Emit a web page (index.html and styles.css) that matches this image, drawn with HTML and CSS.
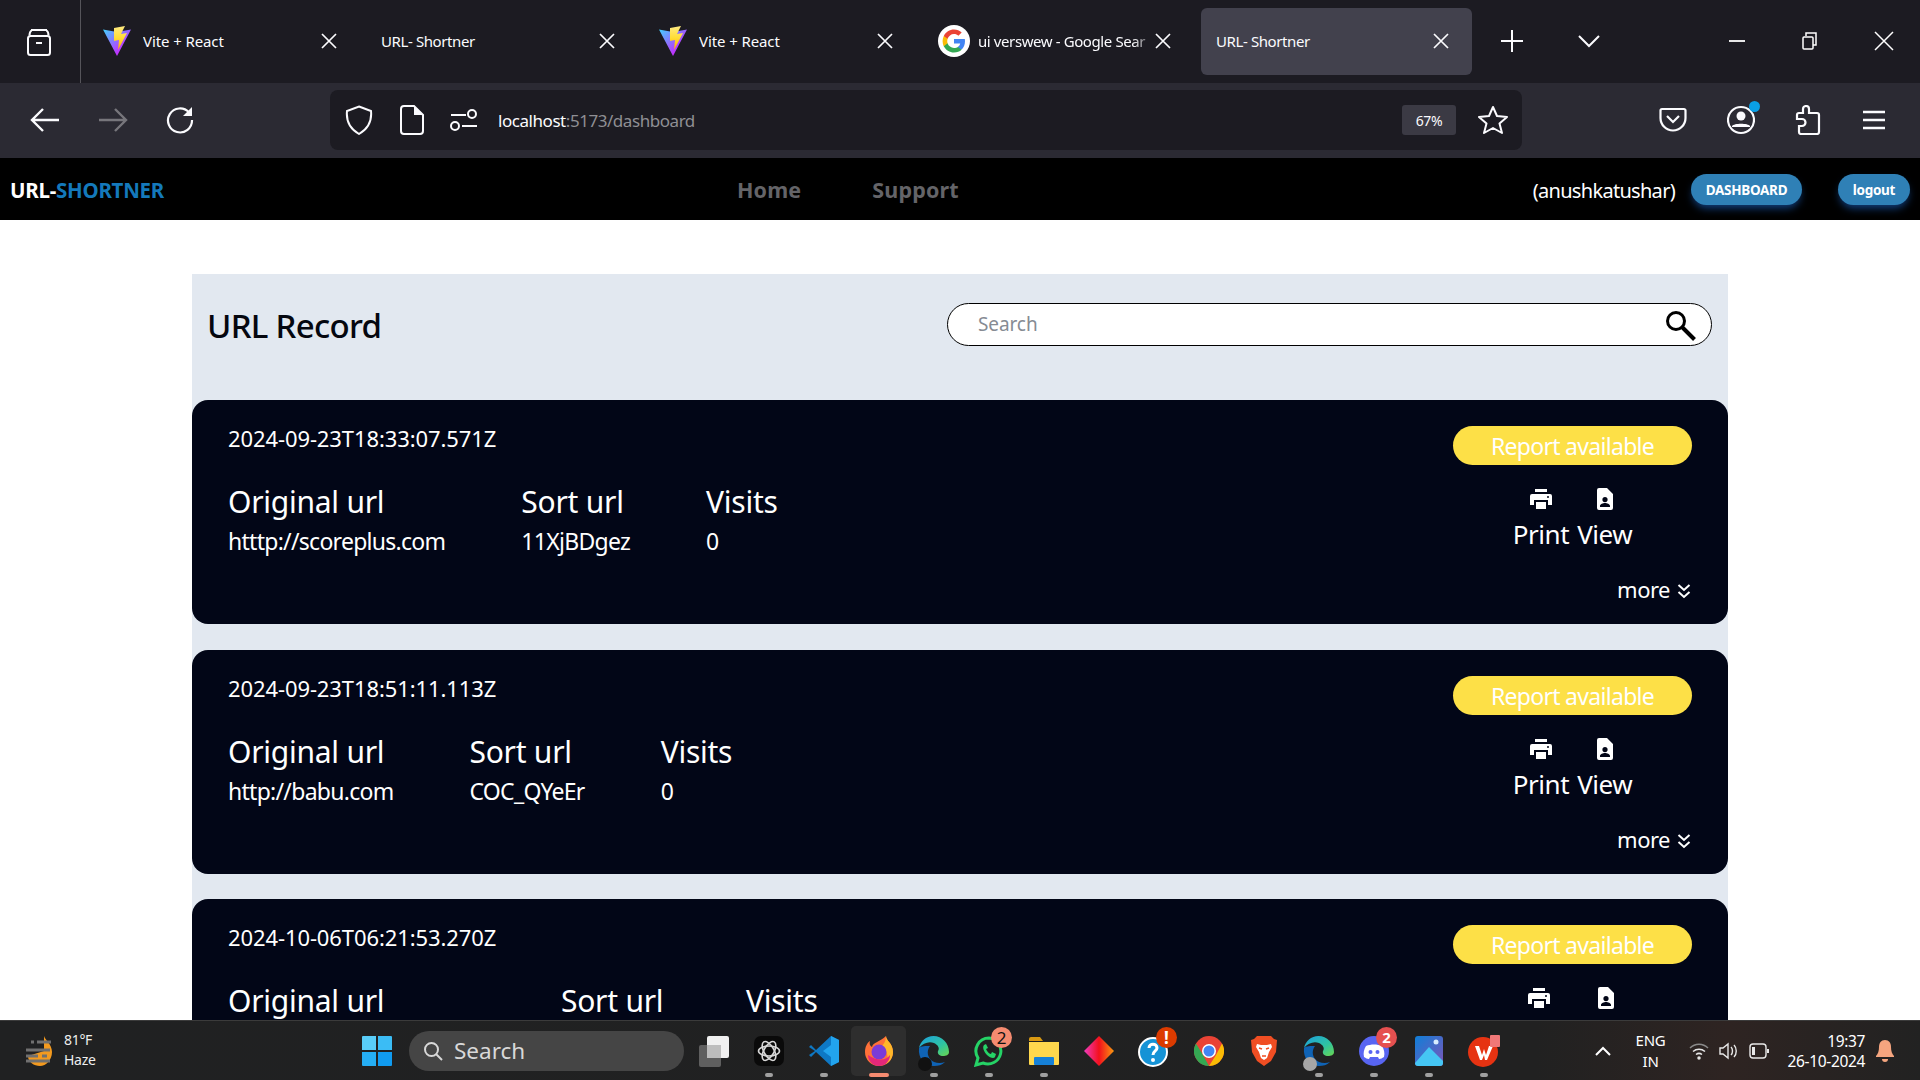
FILE: index.html
```html
<!DOCTYPE html>
<html lang="en">
<head>
<meta charset="utf-8">
<title>URL- Shortner</title>
<link rel="stylesheet" href="styles.css">
</head>
<body>
<svg class="defs" width="0" height="0" aria-hidden="true">
  <defs>
    <linearGradient id="vb" x1="0" y1="0" x2="1" y2="1"><stop offset="0" stop-color="#41d1ff"/><stop offset=".7" stop-color="#bd34fe"/></linearGradient>
    <linearGradient id="vy" x1="0" y1="0" x2="0" y2="1"><stop offset="0" stop-color="#ffea83"/><stop offset=".5" stop-color="#ffdd35"/><stop offset="1" stop-color="#ffa800"/></linearGradient>
    <linearGradient id="eg" x1="0" y1="0" x2="1" y2="1"><stop offset="0" stop-color="#1c9fe0"/><stop offset=".6" stop-color="#2fc4a0"/><stop offset="1" stop-color="#6ad64f"/></linearGradient>
    <symbol id="vite" viewBox="0 0 32 32"><path d="M2 4.500L16 7l14-2.500L16 31z" fill="url(#vb)"/><path d="M13 3l11-2-4 8 6-1-9 17 1-10-5 1z" fill="url(#vy)"/></symbol>
    <symbol id="x" viewBox="0 0 18 18"><path d="M2 2l14 14M16 2L2 16" stroke="#fbfbfe" stroke-width="1.700" fill="none"/></symbol>
    <symbol id="printer" viewBox="0 0 24 24"><path d="M6 2h12v3H6zM3 7h18a2 2 0 0 1 2 2v9h-4v-5H5v5H1V9a2 2 0 0 1 2-2zm16 2a1 1 0 1 0 0 2 1 1 0 0 0 0-2zM7 15h10v7H7z" fill="#fff"/></symbol>
    <symbol id="doc" viewBox="0 0 24 24"><path fill-rule="evenodd" d="M6 1h8l6 6v14a2 2 0 0 1-2 2H6a2 2 0 0 1-2-2V3a2 2 0 0 1 2-2zm6 9a2.600 2.600 0 1 0 0 5.200 2.600 2.600 0 0 0 0-5.200zm-5 10h10v-1c0-2-3-3-5-3s-5 1-5 3z" fill="#fff"/></symbol>
    <symbol id="chev2" viewBox="0 0 14 16"><path d="M1.500 2l5.500 5 5.500-5M1.500 9l5.500 5 5.500-5" stroke="#fff" stroke-width="2" fill="none"/></symbol>
    <symbol id="edge" viewBox="0 0 32 32"><path d="M31 17C31 8 24 1 15.500 1 8 1 2.500 6 1 13c4-5 10-7 15-5 4 2 6 5 4 8-1 3 2 5 5 5 3 0 6-1 6-4z" fill="url(#eg)"/><path d="M1 13C0 23 6 31 16 31c4 0 8-1 11-4-5 2-12 1-15-3-3-4-3-9 0-13-4 0-9 0-11 2z" fill="#0f63b5"/></symbol>
  </defs>
</svg>

<header class="tabstrip">
  <div class="tab-side">
    <svg width="30" height="30" viewBox="0 0 30 30" fill="none" stroke="#fbfbfe" stroke-width="2"><rect x="4" y="9" width="22" height="19" rx="2.500"/><path d="M7 3h16M5.500 8.500c0-3 .5-4 2-5M24.500 8.500c0-3-.5-4-2-5M12 16h6"/></svg>
  </div>
  <div class="tabs">
    <div class="tab icon-tab"><svg class="fav" width="32" height="32"><use href="#vite"/></svg><span class="tab-title">Vite + React</span><svg class="tab-x" width="18" height="18"><use href="#x"/></svg></div>
    <div class="tab plain-tab"><span class="tab-title">URL- Shortner</span><svg class="tab-x" width="18" height="18"><use href="#x"/></svg></div>
    <div class="tab icon-tab"><svg class="fav" width="32" height="32"><use href="#vite"/></svg><span class="tab-title">Vite + React</span><svg class="tab-x" width="18" height="18"><use href="#x"/></svg></div>
    <div class="tab icon-tab g-tab">
      <span class="g-bg"><svg width="24" height="24" viewBox="0 0 24 24"><path d="M23 12.300c0-.8-.1-1.600-.2-2.300H12v4.400h6.200c-.3 1.400-1.100 2.600-2.300 3.400v2.800h3.700c2.100-2 3.400-4.900 3.400-8.300z" fill="#4285f4"/><path d="M12 23.500c3.100 0 5.700-1 7.600-2.800l-3.700-2.800c-1 .7-2.400 1.100-3.900 1.100-3 0-5.500-2-6.400-4.700H1.800v2.900c1.900 3.800 5.800 6.300 10.200 6.300z" fill="#34a853"/><path d="M5.600 14.300c-.5-1.400-.5-3 0-4.500V6.900H1.800c-1.600 3.200-1.600 7 0 10.300z" fill="#fbbc05"/><path d="M12 5c1.700 0 3.200.6 4.400 1.700l3.300-3.300C17.700 1.500 15 .5 12 .5 7.600.5 3.700 3 1.800 6.900l3.800 2.900C6.500 7.100 9 5 12 5z" fill="#ea4335"/></svg></span>
      <span class="tab-title clip">ui verswew - Google Sear</span><svg class="tab-x" width="18" height="18"><use href="#x"/></svg>
    </div>
    <div class="tab active"><span class="tab-title">URL- Shortner</span><svg class="tab-x" width="18" height="18"><use href="#x"/></svg></div>
  </div>
  <svg class="t-plus" width="24" height="24" viewBox="0 0 24 24"><path d="M12 1v22M1 12h22" stroke="#fbfbfe" stroke-width="2"/></svg>
  <svg class="t-down" width="24" height="14" viewBox="0 0 24 14"><path d="M2 2l10 10L22 2" stroke="#fbfbfe" stroke-width="2" fill="none"/></svg>
  <div class="win-ctrls">
    <svg width="18" height="18" viewBox="0 0 18 18"><path d="M1 9h16" stroke="#fff" stroke-width="1.800"/></svg>
    <svg width="18" height="18" viewBox="0 0 18 18" fill="none" stroke="#fff" stroke-width="1.500"><rect x="2" y="5" width="10" height="12" rx="1"/><path d="M5 4V1h10v12h-3"/></svg>
    <svg width="20" height="20" viewBox="0 0 20 20"><path d="M1 1l18 18M19 1L1 19" stroke="#fff" stroke-width="1.500"/></svg>
  </div>
</header>

<div class="toolbar">
  <div class="nav-btns">
    <svg width="30" height="26" viewBox="0 0 30 26" fill="none" stroke="#fbfbfe" stroke-width="2.400"><path d="M29 13H3M13 2L2 13l11 11"/></svg>
    <svg width="30" height="26" viewBox="0 0 30 26" fill="none" stroke="#77767c" stroke-width="2.400"><path d="M1 13h26M17 2l11 11-11 11"/></svg>
    <svg width="28" height="28" viewBox="0 0 28 28" fill="none" stroke="#fbfbfe" stroke-width="2.200"><path d="M23 6.500A12 12 0 1 0 26 14"/><path d="M26 1v9h-9z" fill="#fbfbfe" stroke="none"/></svg>
  </div>
  <div class="urlbar">
    <svg width="28" height="30" viewBox="0 0 28 30" fill="none" stroke="#fbfbfe" stroke-width="2"><path d="M14 1.500L26 6c1 10-3 18-12 23C5 24 1 16 2 6z"/></svg>
    <svg width="24" height="30" viewBox="0 0 24 30" fill="none" stroke="#fbfbfe" stroke-width="2"><path d="M4 1h10l9 9v16a3 3 0 0 1-3 3H4a3 3 0 0 1-3-3V4a3 3 0 0 1 3-3z"/><path d="M14 1v9h9z" fill="#fbfbfe" stroke="none"/></svg>
    <svg class="perm" width="28" height="22" viewBox="0 0 28 22" fill="none" stroke="#fbfbfe" stroke-width="2"><path d="M1 6h15M12 17h15"/><circle cx="22" cy="5" r="4"/><circle cx="5" cy="17" r="4"/></svg>
    <span class="address"><span class="host">localhost</span>:5173/dashboard</span>
    <span class="zoom-badge">67%</span>
    <svg width="30" height="30" viewBox="0 0 30 30" fill="none" stroke="#fbfbfe" stroke-width="2" stroke-linejoin="round"><path d="M15 2l4 9 10 1-7.500 6.500L24 28l-9-5-9 5 2.500-9.500L1 12l10-1z"/></svg>
  </div>
  <div class="tool-right">
    <svg width="28" height="26" viewBox="0 0 28 26" fill="none" stroke="#fbfbfe" stroke-width="2.200"><path d="M3 2h22a1.500 1.500 0 0 1 1.500 1.500V11A12.500 12.500 0 0 1 1.500 11V3.500A1.500 1.500 0 0 1 3 2z"/><path d="M8 9l6 6 6-6"/></svg>
    <span class="acct">
      <svg width="28" height="30" viewBox="0 0 28 30" fill="none" stroke="#fbfbfe" stroke-width="2.200"><circle cx="14" cy="15" r="13"/><circle cx="14" cy="11" r="4.500" fill="#fbfbfe" stroke="none"/><path d="M5 21c2-3 16-3 18 0v1H5z" fill="#fbfbfe" stroke="none"/></svg>
      <i class="acct-dot"></i>
    </span>
    <svg width="26" height="30" viewBox="0 0 26 30" fill="none" stroke="#fbfbfe" stroke-width="2.200"><path d="M11 1a3 3 0 0 1 3 3v4h8a2 2 0 0 1 2 2v17a2 2 0 0 1-2 2H6a2 2 0 0 1-2-2v-6h3a3 3 0 0 0 0-7H2v-4a2 2 0 0 1 2-2h4V4a3 3 0 0 1 3-3z"/></svg>
    <svg class="menu" width="24" height="20" viewBox="0 0 24 20"><path d="M1 2h22M1 10h22M1 18h22" stroke="#fbfbfe" stroke-width="2.400"/></svg>
  </div>
</div>

<nav class="appnav">
  <a class="logo">URL-<span class="logo-accent">SHORTNER</span></a>
  <div class="links"><a>Home</a><a>Support</a></div>
  <div class="user">
    <span class="username">(anushkatushar)</span>
    <button class="pill-btn dash">DASHBOARD</button>
    <button class="pill-btn logout">logout</button>
  </div>
</nav>

<main class="page">
  <section class="panel">
    <div class="panel-head">
      <h1>URL Record</h1>
      <label class="search">
        <span class="search-ph">Search</span>
        <svg width="30" height="30" viewBox="0 0 30 30" fill="none" stroke="#000" stroke-width="3"><circle cx="10" cy="10" r="8.500"/><path d="M16 16l12.500 12.500" stroke-width="4"/></svg>
      </label>
    </div>

    <article class="card">
      <div class="card-main">
        <div class="stamp">2024-09-23T18:33:07.571Z</div>
        <div class="cols">
          <div class="col"><div class="col-h">Original url</div><div class="col-v">htttp://scoreplus.com</div></div>
          <div class="col"><div class="col-h">Sort url</div><div class="col-v">11XjBDgez</div></div>
          <div class="col"><div class="col-h">Visits</div><div class="col-v">0</div></div>
        </div>
      </div>
      <div class="card-side">
        <div class="report">Report available</div>
        <div class="acts">
          <div class="act"><svg width="24" height="24"><use href="#printer"/></svg><span>Print</span></div>
          <div class="act"><svg width="24" height="24"><use href="#doc"/></svg><span>View</span></div>
        </div>
        <div class="more">more <svg width="14" height="16"><use href="#chev2"/></svg></div>
      </div>
    </article>

    <article class="card">
      <div class="card-main">
        <div class="stamp">2024-09-23T18:51:11.113Z</div>
        <div class="cols">
          <div class="col"><div class="col-h">Original url</div><div class="col-v">http://babu.com</div></div>
          <div class="col"><div class="col-h">Sort url</div><div class="col-v">COC_QYeEr</div></div>
          <div class="col"><div class="col-h">Visits</div><div class="col-v">0</div></div>
        </div>
      </div>
      <div class="card-side">
        <div class="report">Report available</div>
        <div class="acts">
          <div class="act"><svg width="24" height="24"><use href="#printer"/></svg><span>Print</span></div>
          <div class="act"><svg width="24" height="24"><use href="#doc"/></svg><span>View</span></div>
        </div>
        <div class="more">more <svg width="14" height="16"><use href="#chev2"/></svg></div>
      </div>
    </article>

    <article class="card">
      <div class="card-main">
        <div class="stamp">2024-10-06T06:21:53.270Z</div>
        <div class="cols">
          <div class="col col-wide"><div class="col-h">Original url</div></div>
          <div class="col col-mid"><div class="col-h">Sort url</div></div>
          <div class="col"><div class="col-h">Visits</div></div>
        </div>
      </div>
      <div class="card-side">
        <div class="report">Report available</div>
        <div class="acts acts-bare">
          <svg width="24" height="24"><use href="#printer"/></svg>
          <svg width="24" height="24"><use href="#doc"/></svg>
        </div>
      </div>
    </article>
  </section>
</main>

<footer class="taskbar">
  <div class="weather">
    <svg width="30" height="32" viewBox="0 0 30 32"><path d="M19 1c1 4 8 8 8 16 0 8-6 14-12 14S3 27 3 21l16-5z" fill="#f39a1f"/><path d="M6 7h3M12 7h14M1 15h24M1 21h12M17 21h5M1 26h24" stroke="#707070" stroke-width="3"/></svg>
    <div class="w-text"><div>81°F</div><div>Haze</div></div>
  </div>
  <div class="task-center">
    <svg class="start" width="30" height="30" viewBox="0 0 30 30"><path d="M0 1a1 1 0 0 1 1-1h13v14H0z" fill="#59cdf8"/><path d="M16 0h13a1 1 0 0 1 1 1v13H16z" fill="#3bbcf5"/><path d="M0 16h14v14H1a1 1 0 0 1-1-1z" fill="#25aef4"/><path d="M16 16h14v13a1 1 0 0 1-1 1H16z" fill="#109bf0"/></svg>
    <div class="tb-search">
      <svg width="20" height="20" viewBox="0 0 20 20" fill="none" stroke="#d8d8d8" stroke-width="2"><circle cx="8.500" cy="8.500" r="6.500"/><path d="M13 13l6 6"/></svg>
      <span>Search</span>
    </div>
    <div class="tb-icons">
      <div class="tb-i"><svg width="32" height="32" viewBox="0 0 32 32"><rect x="1" y="10" width="22" height="22" rx="2" fill="#5f5f5f"/><rect x="9" y="1" width="22" height="22" rx="2" fill="#f0f0f0"/><rect x="9" y="10" width="14" height="13" fill="#bdbdbd"/></svg></div>
      <div class="tb-i run"><svg width="30" height="30" viewBox="0 0 30 30"><rect width="30" height="30" rx="7" fill="#0a0a0a"/><g fill="none" stroke="#d8d8d8" stroke-width="1.600"><ellipse cx="15" cy="15" rx="10.500" ry="5"/><ellipse cx="15" cy="15" rx="10.500" ry="5" transform="rotate(60 15 15)"/><ellipse cx="15" cy="15" rx="10.500" ry="5" transform="rotate(120 15 15)"/></g></svg></div>
      <div class="tb-i run"><svg width="32" height="32" viewBox="0 0 32 32"><path d="M23 1l8 4v22l-8 4L8 17 3 22 1 20l6-4-6-4 2-2 5 5z" fill="#0e78c4"/><path d="M23 1l8 4v22l-8 4V22l-8-6 8-6z" fill="#22a4ee"/></svg></div>
      <div class="tb-i active-app"><svg width="30" height="32" viewBox="0 0 30 32"><path d="M22 1c0 5 7 7 7 16a14 14 0 0 1-28 0C1 12 3 8 6 6c-1 3 0 5 2 6 1-5 8-5 14-11z" fill="#ff7139"/><path d="M22 1c0 5 7 7 7 16 0 5-3 10-7 12 3-6 2-14-5-17 3-3 5-6 5-11z" fill="#ffb72a"/><circle cx="15" cy="17" r="7.500" fill="#7a3bd8"/><path d="M4 20a11 11 0 0 0 22 0c-3 5-12 7-22 0z" fill="#e3287a"/></svg><i class="run-bar"></i></div>
      <div class="tb-i run"><svg width="32" height="32"><use href="#edge"/></svg><i class="avatar dark"></i></div>
      <div class="tb-i run"><svg width="30" height="32" viewBox="0 0 30 32"><path d="M15 3a13 13 0 0 0-11 20l-2 7 7-2A13 13 0 1 0 15 3z" fill="none" stroke="#25d366" stroke-width="3"/><path d="M10 10c-2 2 0 7 3 10s7 4 8 2l1-3-4-2-1 2c-2 0-4-3-5-5l2-1-2-4z" fill="#25d366"/></svg><b class="badge b-wa">2</b></div>
      <div class="tb-i run"><svg width="32" height="30" viewBox="0 0 32 30"><path d="M1 3a2 2 0 0 1 2-2h9l3 4h-14z" fill="#d99a13"/><path d="M1 6h30v22a1 1 0 0 1-1 1H2a1 1 0 0 1-1-1z" fill="#ffd84d"/><rect x="6" y="21" width="20" height="8" rx="1" fill="#1681d8"/></svg></div>
      <div class="tb-i"><svg width="30" height="30" viewBox="0 0 30 30"><defs><linearGradient id="dg" x1="0" x2="1"><stop offset="0" stop-color="#f03cc0"/><stop offset=".5" stop-color="#f3101c"/><stop offset="1" stop-color="#f99a10"/></linearGradient></defs><path d="M15 0l15 15-15 15L0 15z" fill="url(#dg)"/></svg></div>
      <div class="tb-i"><svg width="32" height="32" viewBox="0 0 32 32"><circle cx="15" cy="17" r="14" fill="#1593d6" stroke="#fff" stroke-width="2"/><path d="M11 13c0-5 8-5 8 0 0 3-4 3-4 7" fill="none" stroke="#fff" stroke-width="3"/><circle cx="15" cy="25" r="2" fill="#fff"/></svg><b class="badge b-help">!</b></div>
      <div class="tb-i"><svg width="30" height="30" viewBox="0 0 30 30"><circle cx="15" cy="15" r="15" fill="#ea4335"/><path d="M15 30A15 15 0 0 1 2 7.500L9 19z" fill="#34a853"/><path d="M28 7.500A15 15 0 0 1 15 30l7-11z" fill="#fbbc05"/><circle cx="15" cy="15" r="7" fill="#fff"/><circle cx="15" cy="15" r="5.500" fill="#4285f4"/></svg></div>
      <div class="tb-i"><svg width="28" height="32" viewBox="0 0 28 32"><path d="M7 1h14l3 3 3 1-1 12-5 9-7 5-7-5-5-9L1 5l3-1z" fill="#f04e23"/><path d="M7 9l4 1h6l4-1 1 3-3 5-2 6-3 2-3-2-2-6-3-5z" fill="#fff"/><path d="M9 13l3 1M19 13l-3 1M12 21h4" stroke="#f04e23" stroke-width="1.500"/></svg></div>
      <div class="tb-i run"><svg width="32" height="32"><use href="#edge"/></svg><i class="avatar"></i></div>
      <div class="tb-i run"><svg width="32" height="32" viewBox="0 0 32 32"><circle cx="16" cy="16" r="15" fill="#5865f2"/><path d="M8 11c5-2 11-2 16 0 2 3 3 7 2 11-2 1-3 2-5 2l-1-2h-8l-1 2c-2 0-3-1-5-2-1-4 0-8 2-11z" fill="#fff"/><circle cx="12.500" cy="17" r="2" fill="#5865f2"/><circle cx="19.500" cy="17" r="2" fill="#5865f2"/></svg><b class="badge b-dc">2</b></div>
      <div class="tb-i run"><svg width="28" height="30" viewBox="0 0 28 30"><defs><linearGradient id="pg" x1="0" y1="0" x2="1" y2="1"><stop offset="0" stop-color="#0f7fd8"/><stop offset="1" stop-color="#7d55b8"/></linearGradient></defs><rect width="28" height="30" rx="3" fill="url(#pg)"/><circle cx="21" cy="6" r="2.500" fill="#d8ecff"/><path d="M0 27l14-16 14 14v2a3 3 0 0 1-3 3H3a3 3 0 0 1-3-3z" fill="#45c6f4"/></svg></div>
      <div class="tb-i run"><svg width="32" height="32" viewBox="0 0 32 32"><circle cx="15" cy="17" r="15" fill="#e63312"/><path d="M7 11h4l3 9 2-6 2 6 3-9h4l-6 14h-2l-1-5-2 5h-2z" fill="#fff"/><rect x="22" y="0" width="10" height="12" rx="1" fill="#f07878"/></svg></div>
    </div>
  </div>
  <div class="tray">
    <svg width="18" height="12" viewBox="0 0 18 12"><path d="M2 10l7-7 7 7" stroke="#fff" stroke-width="2" fill="none"/></svg>
    <div class="lang"><div>ENG</div><div>IN</div></div>
    <div class="tray-icons">
      <svg width="20" height="18" viewBox="0 0 20 18" fill="none" stroke="#e8e8e8" stroke-width="1.500"><path d="M1 6c5-5 13-5 18 0" stroke="#8a8a8a"/><path d="M4 9.500c3.500-3 8.500-3 12 0"/><path d="M7 12.500c2-1.500 4-1.500 6 0"/><circle cx="10" cy="16" r="1" fill="#e8e8e8"/></svg>
      <svg width="20" height="18" viewBox="0 0 20 18" fill="none" stroke="#e8e8e8" stroke-width="1.400"><path d="M1 6h3l5-4v14l-5-4H1zM12 5c2 2 2 6 0 8M15 3c3 3 3 9 0 12"/></svg>
      <svg width="20" height="16" viewBox="0 0 20 16" fill="none" stroke="#e8e8e8" stroke-width="1.400"><rect x="1" y="1" width="16" height="14" rx="3"/><rect x="3" y="4" width="3" height="8" fill="#e8e8e8" stroke="none"/><path d="M19 6v4" stroke-width="2"/></svg>
    </div>
    <div class="clock"><div>19:37</div><div>26-10-2024</div></div>
    <svg width="18" height="22" viewBox="0 0 18 22"><path d="M9 0c4 0 6 3 6 7 0 4 1 7 3 9v1H0v-1c2-2 3-5 3-9 0-4 2-7 6-7z" fill="#f5a57f"/><path d="M6 19h6c0 2-1 3-3 3s-3-1-3-3z" fill="#f5a57f"/></svg>
  </div>
</footer>
</body>
</html>
```

FILE: styles.css
```css
* { box-sizing: border-box; }
html, body { height: 100%; }
body {
  margin: 0;
  height: 1080px;
  overflow: hidden;
  display: flex;
  flex-direction: column;
  font-family: "Noto Sans", "Open Sans", sans-serif;
  background: #fff;
}
.defs { position: absolute; }

/* browser tabs */
.tabstrip {
  height: 83px;
  flex: none;
  background: #1c1b22;
  display: flex;
  align-items: center;
  color: #fbfbfe;
}
.tab-side {
  width: 81px;
  height: 83px;
  border-right: 1px solid #55545a;
  display: flex;
  align-items: center;
  justify-content: center;
  padding-right: 3px;
}
.tabs { display: flex; gap: 7px; margin-left: 8px; }
.tab {
  width: 271px;
  height: 67px;
  border-radius: 6px;
  display: flex;
  align-items: center;
  padding: 0 22px 2px 15px;
}
.plain-tab { padding-left: 14px; }
.icon-tab { padding-left: 12px; }
.fav { flex: none; margin-right: 10px; }
.g-tab { padding-left: 15px; }
.g-bg {
  width: 32px; height: 32px; border-radius: 50%;
  background: #fff;
  display: flex; align-items: center; justify-content: center;
  margin-right: 8px; flex: none;
}
.tab-title {
  font: 15px "Noto Sans", sans-serif;
  letter-spacing: -.4px;
  flex: 1;
  white-space: nowrap;
  overflow: hidden;
  color: #fbfbfe;
}
.icon-tab .tab-title { letter-spacing: -.1px; }
.g-tab .tab-title { letter-spacing: -.4px; }
.clip {
  -webkit-mask-image: linear-gradient(90deg, #000 88%, transparent);
  mask-image: linear-gradient(90deg, #000 88%, transparent);
}
.tab-x { flex: none; }
.t-plus { margin-left: 28px; margin-bottom: 2px; }
.t-down { margin-left: 53px; margin-bottom: 2px; }
.win-ctrls {
  margin-left: auto;
  display: flex;
  gap: 55px;
  align-items: center;
  padding: 0 26px 2px 0;
}
.tab.active { background: #42414d; }

/* browser toolbar */
.toolbar {
  height: 75px;
  flex: none;
  background: #2b2a33;
  display: flex;
  align-items: center;
  padding-bottom: 1px;
}
.nav-btns { display: flex; gap: 38px; align-items: center; margin-left: 30px; width: 300px; }
.urlbar {
  width: 1192px;
  height: 60px;
  background: #1c1b22;
  border-radius: 8px;
  display: flex;
  align-items: center;
  padding: 0 14px 0 15px;
  gap: 27px;
  flex: none;
}
.perm { margin-left: -1px; }
.address {
  font-size: 17px;
  letter-spacing: -.45px;
  color: #8f8f94;
  margin-left: -7px;
  flex: 1;
}
.host { color: #fbfbfe; }
.zoom-badge {
  width: 54px; height: 30px;
  background: #3b3a44;
  border-radius: 3px;
  color: #fbfbfe;
  font-size: 14px;
  letter-spacing: -.4px;
  display: flex; align-items: center; justify-content: center;
  margin-right: -5px;
}
.tool-right {
  display: flex;
  align-items: center;
  gap: 40px;
  margin-left: 137px;
}
.menu { margin-left: 1px; }
.acct { position: relative; display: flex; }
.acct-dot {
  position: absolute; top: -4px; right: -5px;
  width: 11px; height: 11px; border-radius: 50%;
  background: #0a9fe6;
}

/* app navbar */
.appnav {
  height: 62px;
  flex: none;
  background: #000;
  display: flex;
  align-items: center;
  padding: 0 10px;
}
.logo { color: #fff; font-weight: 700; font-size: 20.500px; letter-spacing: -.25px; width: 164px; margin-top: 2px; }
.logo-accent { color: #1479bb; }
.links {
  display: flex;
  gap: 71px;
  margin-left: 563px;
  font-weight: 700;
  font-size: 21.500px;
  letter-spacing: .15px;
  color: #646468;
}
.user { margin-left: auto; display: flex; align-items: center; }
.username { color: #fff; font-size: 20px; letter-spacing: -.7px; margin: 2px 16px 0 0; }
.pill-btn {
  height: 31px;
  margin-top: 1px;
  border: 0;
  border-radius: 16px;
  background: #2f80b6;
  color: #fff;
  font: 700 13.500px "Noto Sans", sans-serif;
  letter-spacing: -.3px;
  box-shadow: 0 5px 9px -2px rgba(30,110,220,.6);
  padding: 0;
}
.dash { width: 111px; }
.logout { width: 72px; margin-left: 36px; }

/* page */
.page { flex: 1; min-height: 0; overflow: hidden; padding: 54px 192px 0; }
.panel {
  background: #e2e8f0;
  padding: 0 0 20px;
  min-height: 800px;
}
.panel-head {
  height: 126px;
  display: flex;
  align-items: center;
  justify-content: space-between;
  padding: 0 16px 24px 15px;
}
h1 { margin: 0; font-size: 33px; font-weight: 500; letter-spacing: -.7px; color: #05070f; }
.search {
  width: 765px;
  height: 43px;
  border: 1px solid #000;
  border-radius: 22px;
  background: #fff;
  display: flex;
  align-items: center;
  justify-content: space-between;
  padding: 0 15px 0 30px;
  margin-top: -2px;
}
.search-ph { color: #868b93; font-size: 19px; letter-spacing: -.1px; }
.search svg { margin-top: 3px; }

.card {
  height: 224px;
  background: #020617;
  border-radius: 16px;
  margin-bottom: 25.600px;
  color: #fff;
  display: flex;
  justify-content: space-between;
  padding: 25px 36px 0;
}
.stamp { font-size: 22px; letter-spacing: -.1px; line-height: 26px; }
.cols { display: flex; gap: 76px; margin-top: 33px; }
.col-h { font-size: 30px; letter-spacing: -.25px; line-height: 36px; }
.col-v { font-size: 23px; letter-spacing: -.72px; line-height: 36px; margin-top: 3px; }
.col-wide { width: 257px; }
.col-mid { width: 109px; }
.card-side { width: 239px; display: flex; flex-direction: column; align-items: center; padding-top: 1px; }
.report {
  width: 239px; height: 39px;
  border-radius: 20px;
  background: #fde047;
  color: #fff;
  font-size: 23px;
  letter-spacing: -.7px;
  line-height: 41px;
  text-align: center;
}
.acts { display: flex; gap: 8px; margin-top: 22px; }
.acts-bare { gap: 43px; }
.act { display: flex; flex-direction: column; align-items: center; }
.act span { font-size: 26px; letter-spacing: -.45px; line-height: 46px; }
.more {
  align-self: flex-end;
  font-size: 22px;
  letter-spacing: -.5px;
  margin-top: 17px;
  display: flex;
  align-items: center;
  gap: 7px;
  margin-right: 1px;
}
.more svg { margin-top: 4px; }

/* taskbar */
.taskbar {
  height: 60px;
  flex: none;
  border-top: 1px solid #3b3b3b;
  background: linear-gradient(90deg, #202122 0, #212121 80%, #2e2422 90%, #222 100%);
  display: flex;
  align-items: center;
  color: #fff;
  position: relative;
}
.weather { display: flex; align-items: center; gap: 9px; margin-left: 25px; width: 338px; }
.w-text { font-size: 14px; line-height: 20px; letter-spacing: -.3px; color: #eee; margin-top: -2px; }
.task-center { display: flex; align-items: center; margin-left: -1px; }
.start { flex: none; }
.tb-search {
  width: 275px;
  height: 40px;
  margin-left: 17px;
  border-radius: 20px;
  background: #454545;
  display: flex;
  align-items: center;
  gap: 11px;
  padding-left: 14px;
  color: #d8d8d8;
  font-size: 22.500px;
}
.tb-icons { display: flex; margin-left: 2px; }
.tb-i {
  width: 55px;
  height: 50px;
  flex: none;
  display: flex;
  align-items: center;
  justify-content: center;
  position: relative;
  border-radius: 5px;
}
.tb-i.run::after {
  content: "";
  position: absolute;
  bottom: -1px; left: 50%;
  width: 8px; height: 4px; margin-left: -4px;
  border-radius: 2px;
  background: #a0a0a0;
}
.active-app { background: #2e2e2e; }
.run-bar {
  position: absolute;
  bottom: -1px; left: 50%;
  width: 20px; height: 4px; margin-left: -10px;
  border-radius: 2px;
  background: #f58b70;
}
.avatar {
  position: absolute;
  left: 12px; bottom: 5px;
  width: 14px; height: 14px;
  border-radius: 50%;
  background: #a6a6a6;
}
.avatar.dark { background: #111; }
.badge {
  position: absolute;
  top: 1px; right: 4px;
  width: 21px; height: 21px;
  border-radius: 50%;
  font-size: 17px;
  font-weight: 400;
  line-height: 21px;
  text-align: center;
}
.b-wa { background: #f58b70; color: #111; }
.b-help { background: #dc3b00; color: #fff; font-weight: 700; }
.b-dc { background: #e55050; color: #fff; font-size: 15px; font-weight: 700; }
.tray {
  position: absolute;
  right: 26px;
  top: 0; height: 100%;
  display: flex;
  align-items: center;
}
.lang { font-size: 15px; line-height: 21px; text-align: center; margin-left: 24px; letter-spacing: -.2px; }
.tray-icons { display: flex; gap: 10px; margin-left: 23px; align-items: center; }
.clock { font-size: 15.500px; line-height: 20px; text-align: right; margin-left: 19px; letter-spacing: -.35px; margin-right: 11px; }
```
